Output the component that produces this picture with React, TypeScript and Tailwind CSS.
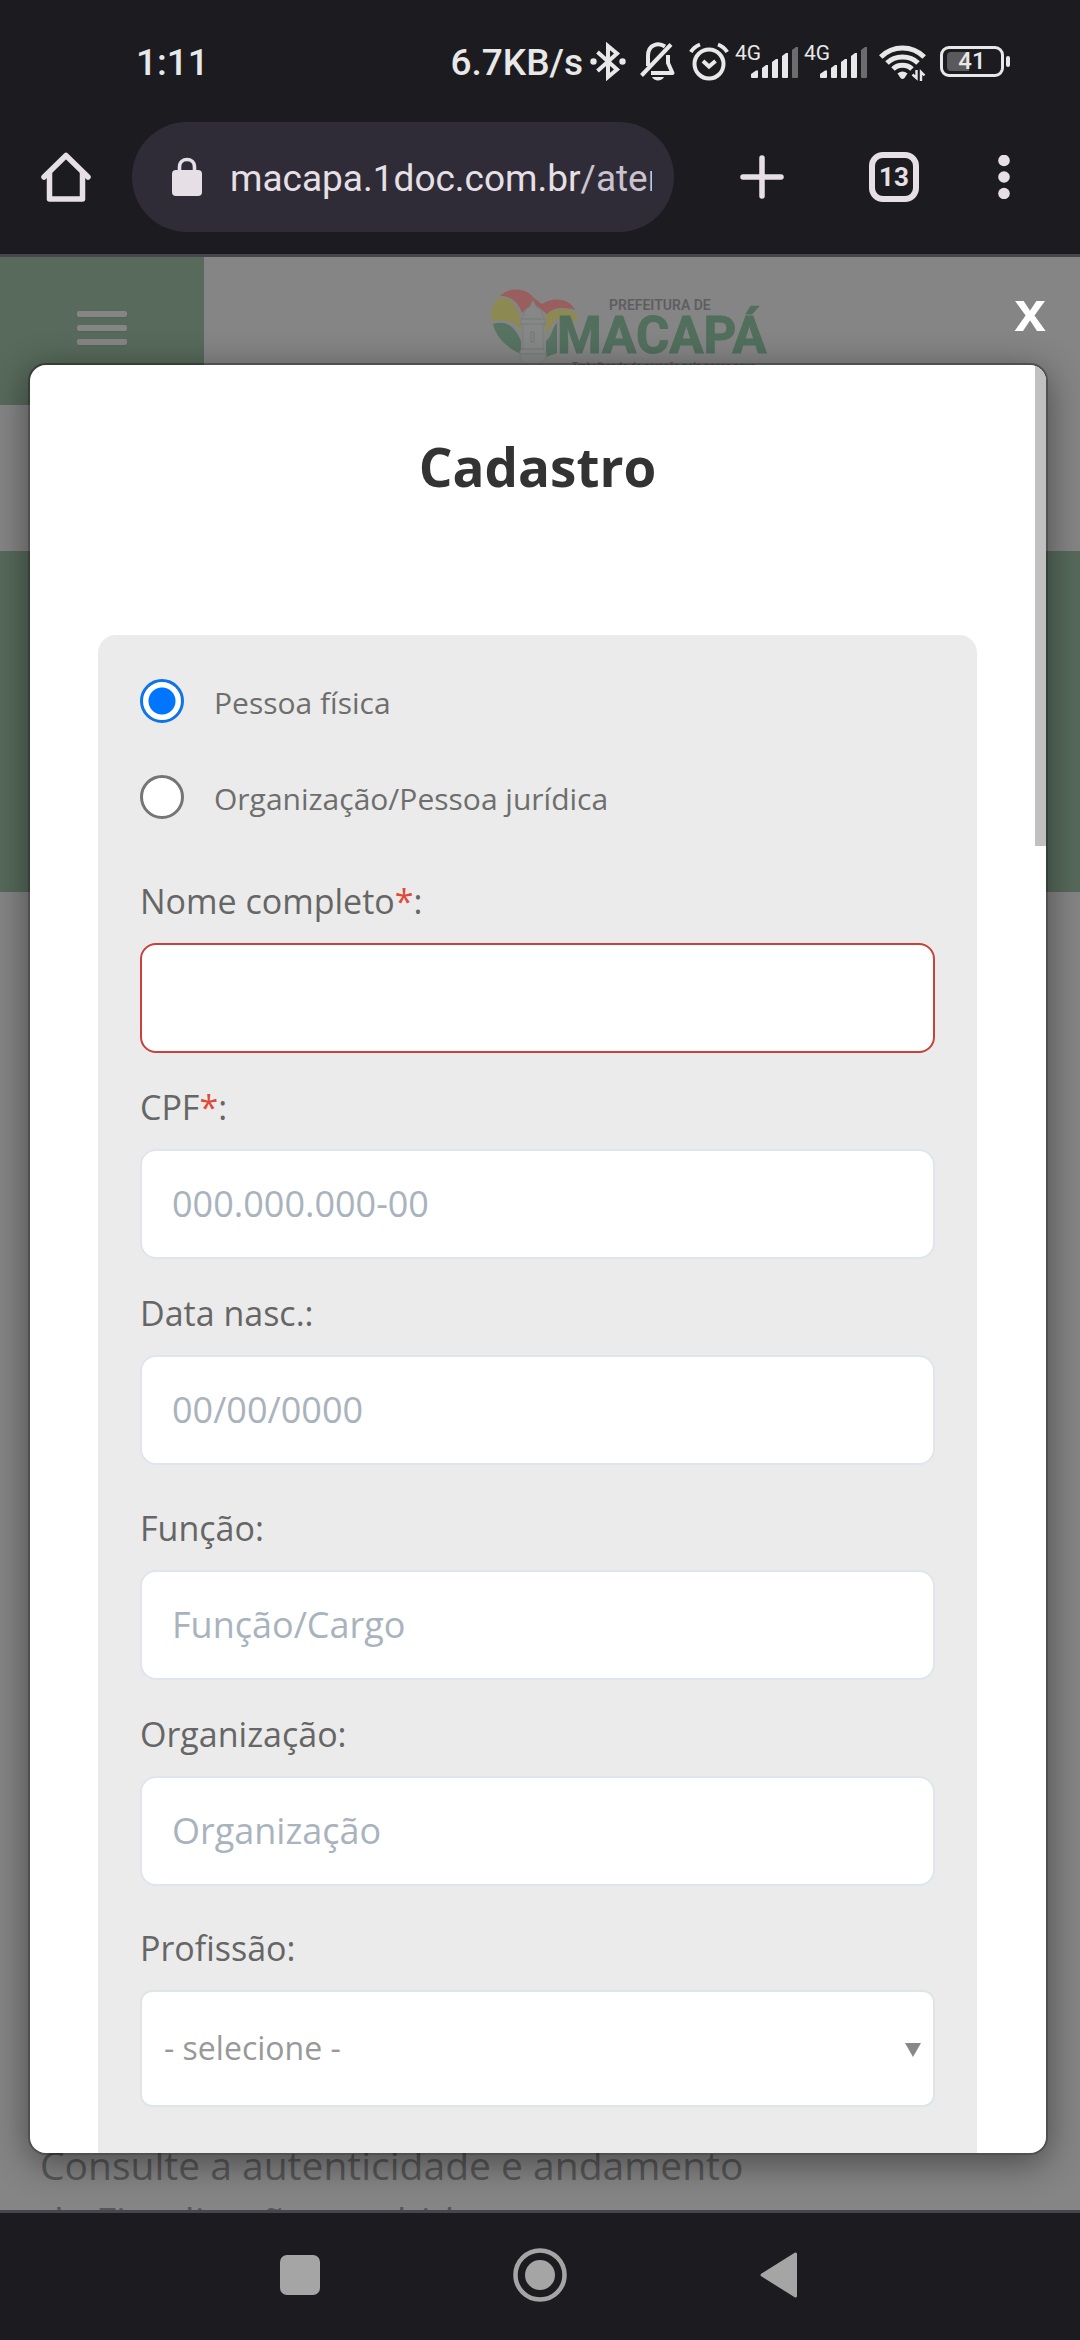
import React from "react";

const fg = "#e8e8e8";

function BluetoothIcon() {
  return (
    <svg width="36" height="40" viewBox="0 0 36 40" fill="none" stroke={fg} strokeWidth="4">
      <path d="M7.500 11 L27 28.500 L18 36 V5 L27 12.500 L7.500 30" />
      <circle cx="3.5" cy="20.500" r="3.200" fill={fg} stroke="none" />
      <circle cx="32.5" cy="20.500" r="3.200" fill={fg} stroke="none" />
    </svg>
  );
}

function BellOffIcon() {
  return (
    <svg width="36" height="40" viewBox="0 0 36 40" fill="none" stroke={fg} strokeWidth="4">
      <path d="M1.500 34.500 L31 3.500" />
      <path d="M8 25 V15 C8 2.500 19 1.500 25 5.500" />
      <path d="M28 14 V22 L32.500 32 H11" strokeLinejoin="round" />
      <path d="M12 36 H24 C22 40.500 14 40.500 12 36Z" fill={fg} stroke="none" />
    </svg>
  );
}

function AlarmIcon() {
  return (
    <svg width="40" height="40" viewBox="0 0 40 40" fill="none" stroke={fg} strokeWidth="4">
      <circle cx="20" cy="23" r="14.500" />
      <path d="M14 20 L20 25.500 L26.500 20" />
      <path d="M1.800 11 C4 7.500 7 5 11 3.500 M38.200 11 C36 7.500 33 5 29 3.500" />
    </svg>
  );
}

function SignalIcon() {
  return (
    <div className="relative flex h-10 w-[64px] justify-end">
      <span className="absolute top-0 left-0 text-[21px] leading-6 text-[#e8e8e8]">4G</span>
      <svg width="48" height="40" viewBox="0 0 48 40" fill={fg}>
        <path d="M0 36 V33 L5 29.500 H7 V36 Q7 37 6 37 H1 Q0 37 0 36Z" />
        <path d="M11 36 V27 L15 24 H17 V36 Q17 37 16 37 H12 Q11 37 11 36Z" />
        <path d="M21 36 V21 L25 18 H27 V36 Q27 37 26 37 H22 Q21 37 21 36Z" />
        <path d="M31 36 V15 L35 12 H37 V36 Q37 37 36 37 H32 Q31 37 31 36Z" />
        <path d="M41 36 V9 L45 6 H47 V36 Q47 37 46 37 H42 Q41 37 41 36Z" fill="#6c6c6e" />
      </svg>
    </div>
  );
}

function WifiIcon() {
  return (
    <svg width="48" height="40" viewBox="0 0 48 40" fill="none" stroke={fg} strokeWidth="5">
      <path d="M1.800 16 C14 4 33 4 45.200 16" />
      <path d="M8 22 C16 14 31 14 39 22" />
      <path d="M14 28 C19 23 28 23 33 28" />
      <path d="M18.500 32.500 Q23.500 28.500 28.500 32.500 L25.500 37 Q23.500 39 21.500 37Z" fill={fg} stroke="none" />
      <path d="M37.500 29 V37 L33.500 33.500 M42 40 V31 L45.500 34.500" strokeWidth="2.400" />
    </svg>
  );
}

function Battery() {
  return (
    <div className="flex items-center gap-[2px]">
      <div className="relative flex h-[31px] w-[64px] items-center justify-center rounded-[9px] border-[3px] border-[#e8e8e8]">
        <div className="absolute top-[3px] bottom-[3px] left-1 w-[22px] rounded-l-[4px] bg-[#5a5a5c]" />
        <span className="relative text-[24px] leading-6 font-medium text-[#e8e8e8]">41</span>
      </div>
      <div className="h-[11px] w-1 rounded-[2px] bg-[#e8e8e8]" />
    </div>
  );
}

function StatusBar() {
  return (
    <div className="flex h-[122px] items-center pr-[70px] pl-[136px] text-[#e8e8e8]">
      <span className="pt-1 text-[37px] font-medium">1:11</span>
      <div className="ml-auto flex items-center">
        <span className="mr-[7px] pt-1 text-[37px] font-medium">6.7KB/s</span>
        <BluetoothIcon />
        <span className="w-[14px]" />
        <BellOffIcon />
        <span className="w-[13px]" />
        <AlarmIcon />
        <span className="w-[6px]" />
        <SignalIcon />
        <span className="w-[5px]" />
        <SignalIcon />
        <span className="w-[11px]" />
        <WifiIcon />
        <span className="w-[13px]" />
        <Battery />
      </div>
    </div>
  );
}

function BrowserBar() {
  return (
    <div className="flex h-[135px] items-start border-b-[3px] border-[#47464e] pr-[70px] pl-[41px] text-[#e6e0e6]">
      <button type="button" aria-label="Página inicial" className="mt-[30px]">
        <svg width="50" height="50" viewBox="0 0 50 50" fill="none" stroke="currentColor" strokeWidth="5.500" strokeLinecap="round" strokeLinejoin="round">
          <path d="M3 25 L25 3.500 L47 25" />
          <path d="M8.500 21 V47 H41.500 V21" />
        </svg>
      </button>
      <div className="ml-[41px] flex h-[110px] min-w-0 flex-1 items-center rounded-full bg-[#2f2c37] pr-[22px] pl-10">
        <svg width="30" height="40" viewBox="0 0 30 40" className="shrink-0">
          <path d="M7.500 15 V10 C7.500 0 22.500 0 22.500 10 V15" fill="none" stroke="currentColor" strokeWidth="3.600" />
          <rect y="13" width="30" height="26" rx="4" fill="currentColor" />
        </svg>
        <div className="ml-[28px] flex-1 overflow-hidden pt-1 text-[37px] leading-[48px] whitespace-nowrap">
          macapa.1doc.com.br<span className="text-[#c9c3cf]">/atendimento</span>
        </div>
      </div>
      <button type="button" aria-label="Nova guia" className="mt-[33px] ml-[66px]">
        <svg width="44" height="44" viewBox="0 0 44 44" stroke="currentColor" strokeWidth="5.500" strokeLinecap="round">
          <path d="M22 3 V41 M3 22 H41" />
        </svg>
      </button>
      <button type="button" aria-label="Guias" className="mt-[30px] ml-[85px] flex size-[50px] items-center justify-center rounded-[14px] border-[6px] border-current text-[26px] leading-7 font-bold">
        13
      </button>
      <button type="button" aria-label="Menu" className="mt-[33px] ml-[79px]">
        <svg width="12" height="44" viewBox="0 0 12 44" fill="currentColor">
          <circle cx="6" cy="5.500" r="5.800" />
          <circle cx="6" cy="22" r="5.800" />
          <circle cx="6" cy="38.500" r="5.800" />
        </svg>
      </button>
    </div>
  );
}

function Logo() {
  return (
    <svg width="280" height="90" viewBox="0 0 280 90" role="img" aria-label="Prefeitura de Macapá">
      <path d="M10 9 C18 0 36 0 44 11 L52 17 C64 9 80 12 85 23 C74 20 64 20 57 27 L43 16 L32 26 C28 14 20 9 10 9Z" fill="#995f5f" />
      <path d="M9 11 C20 8 30 20 32 43 C24 33 14 32 2 34 C0 26 2 17 9 11Z" fill="#8d8952" />
      <path d="M56 47 V28 C66 20 80 21 87 28 V36 L82 32 H68 C62 36 60 42 56 47Z" fill="#8d8952" />
      <path d="M3 37 C18 32 26 42 31 54 V67 C16 60 6 50 3 37Z" fill="#577362" />
      <path d="M56 70 V54 C62 50 62 40 67 36 V66Z" fill="#577362" />
      <path d="M43 13 L46 20 Q52 22 53 30 L55 32 V38 H53 V62 L56 64 V70 Q54 78 43 79 Q32 78 30 70 V64 L33 62 V38 H31 V32 L33 30 Q34 22 40 20Z" fill="#868888" stroke="#7c7f7e" />
      <path d="M31 32 H55 M31 37 H55 M32 62 H54 M30 67 H56" stroke="#747978" />
      <rect x="41" y="45" width="3" height="10" fill="none" stroke="#747776" />
      <text x="119" y="23" fontSize="14" fontWeight="600" fill="#5e5e60" fontFamily="Roboto, sans-serif">PREFEITURA DE</text>
      <text x="67" y="66" fontSize="51" fontWeight="700" fill="#526f5e" stroke="#526f5e" strokeWidth="1" fontFamily="Roboto, sans-serif">MACAPÁ</text>
      <text x="82" y="83" fontSize="10" fontWeight="500" fill="#5e5e60" fontFamily="Roboto, sans-serif">Trabalhando de coração pelo nosso povo</text>
    </svg>
  );
}

function Page() {
  return (
    <div className="h-full overflow-hidden bg-[#858585]">
      <div className="flex h-[148px]">
        <button type="button" aria-label="Abrir menu" className="flex w-[204px] flex-col items-center justify-start bg-[#576a5b] pt-[54px]">
          <span className="flex flex-col gap-2">
            <span className="h-[6px] w-[50px] rounded-[2px] bg-[#858585] shadow-xs" />
            <span className="h-[6px] w-[50px] rounded-[2px] bg-[#858585] shadow-xs" />
            <span className="h-[6px] w-[50px] rounded-[2px] bg-[#858585] shadow-xs" />
          </span>
        </button>
        <div className="flex flex-1 items-start pt-[30px] pl-[286px]">
          <Logo />
        </div>
      </div>
      <div className="mt-[146px] h-[341px] bg-[#576a5b]" />
      <p className="mt-[1245px] pl-10 font-['Open_Sans',sans-serif] text-[39px] leading-[56px] text-[#575757]">
        Consulte a autenticidade e andamento
        <br />
        de Fiscalização recebida
      </p>
    </div>
  );
}

const inputClass =
  "block h-[110px] w-full rounded-[16px] border-2 border-[#dfe5ec] bg-white px-[30px] pb-[2px] text-[36px] text-[#666] placeholder:text-[#a9b3bd] outline-none";
const labelClass = "block h-[68px] pt-[2px] text-[34px] leading-[48px] text-[#666]";

type FieldProps = {
  id: string;
  label: string;
  required?: boolean;
  placeholder?: string;
  invalid?: boolean;
  className?: string;
};

function Field({ id, label, required, placeholder, invalid, className = "" }: FieldProps) {
  return (
    <div className={className}>
      <label htmlFor={id} className={labelClass}>
        {label}
        {required && <span className="text-[#dd4b39]">*</span>}:
      </label>
      <input id={id} type="text" placeholder={placeholder} className={invalid ? `${inputClass} border-[#c9403c]!` : inputClass} />
    </div>
  );
}

function Choice({ id, label, defaultChecked }: { id: string; label: string; defaultChecked?: boolean }) {
  return (
    <div className="flex h-11 items-center gap-[30px]">
      <input
        id={id}
        type="radio"
        name="tipo"
        defaultChecked={defaultChecked}
        className="size-11 shrink-0 appearance-none rounded-full border-[3px] border-[#757575] bg-white checked:border-[#0f74e8] checked:bg-[radial-gradient(circle,#0075ff_13px,white_14px)]"
      />
      <label htmlFor={id} className="pt-1 text-[30px] leading-10 text-[#6e6e6e]">
        {label}
      </label>
    </div>
  );
}

function Modal() {
  return (
    <div role="dialog" aria-labelledby="titulo" className="relative h-full overflow-hidden rounded-[16px] bg-white font-['Open_Sans',sans-serif]">
      <div className="absolute top-0 right-0 h-[481px] w-[11px] bg-[#c0c0c0]" />
      <form className="pr-[69px] pl-[68px]">
        <h1 id="titulo" className="h-[270px] pt-16 text-center text-[53px] leading-[76px] font-bold text-[#333]">
          Cadastro
        </h1>
        <div className="rounded-t-[18px] bg-[#ebebeb] px-[42px] pt-11 pb-24">
          <div className="flex flex-col gap-[52px]">
            <Choice id="fisica" label="Pessoa física" defaultChecked />
            <Choice id="juridica" label="Organização/Pessoa jurídica" />
          </div>
          <div className="mt-14 flex flex-col gap-7">
            <Field id="nome" label="Nome completo" required invalid />
            <Field id="cpf" label="CPF" required placeholder="000.000.000-00" />
            <Field id="nasc" label="Data nasc." placeholder="00/00/0000" />
            <Field id="funcao" label="Função" placeholder="Função/Cargo" className="mt-[9px]" />
            <Field id="org" label="Organização" placeholder="Organização" />
            <div className="mt-2">
              <label htmlFor="profissao" className={labelClass}>
                Profissão:
              </label>
              <div className="relative">
                <select id="profissao" className="block h-[117px] w-full appearance-none rounded-[12px] border-2 border-[#dde5ea] bg-white px-[22px] pb-[2px] text-[32px] text-[#999]">
                  <option>- selecione -</option>
                </select>
                <svg width="16" height="14" viewBox="0 0 16 14" className="pointer-events-none absolute top-[53px] right-[14px]">
                  <path d="M0 0 H16 L8 14Z" fill="#888" />
                </svg>
              </div>
            </div>
          </div>
        </div>
      </form>
    </div>
  );
}

function NavBar() {
  return (
    <div className="flex h-[130px] items-start justify-center border-t-[3px] border-[#47464e] bg-[#1c1b20]">
      <div className="flex h-[124px] items-center gap-[193px] pr-[2px]">
        <button type="button" aria-label="Recentes" className="size-10 rounded-[7px] bg-[#a5a5a5]" />
        <button type="button" aria-label="Início">
          <svg width="54" height="54" viewBox="0 0 54 54">
            <circle cx="27" cy="27" r="24.500" fill="none" stroke="#a5a5a5" strokeWidth="4.500" />
            <circle cx="27" cy="27" r="15" fill="#a5a5a5" />
          </svg>
        </button>
        <button type="button" aria-label="Voltar">
          <svg width="38" height="46" viewBox="0 0 38 46">
            <path d="M2 23 L35.500 2 V44Z" fill="#a5a5a5" stroke="#a5a5a5" strokeWidth="3" strokeLinejoin="round" />
          </svg>
        </button>
      </div>
    </div>
  );
}

export default function App() {
  return (
    <div className="flex h-screen flex-col bg-[#1c1b20] font-[Roboto,sans-serif]">
      <StatusBar />
      <BrowserBar />
      <main className="relative min-h-0 flex-1 overflow-hidden">
        <Page />
        <button type="button" aria-label="Fechar" className="absolute top-[22px] right-[34px] font-['Liberation_Sans',sans-serif] text-[57px] leading-[64px] font-bold text-white">
          x
        </button>
        <div className="absolute top-[106px] right-8 bottom-[55px] left-7 rounded-[18px] border-2 border-[#00000066] shadow-[0_8px_36px_rgba(0,0,0,0.45)]">
          <Modal />
        </div>
      </main>
      <NavBar />
    </div>
  );
}
